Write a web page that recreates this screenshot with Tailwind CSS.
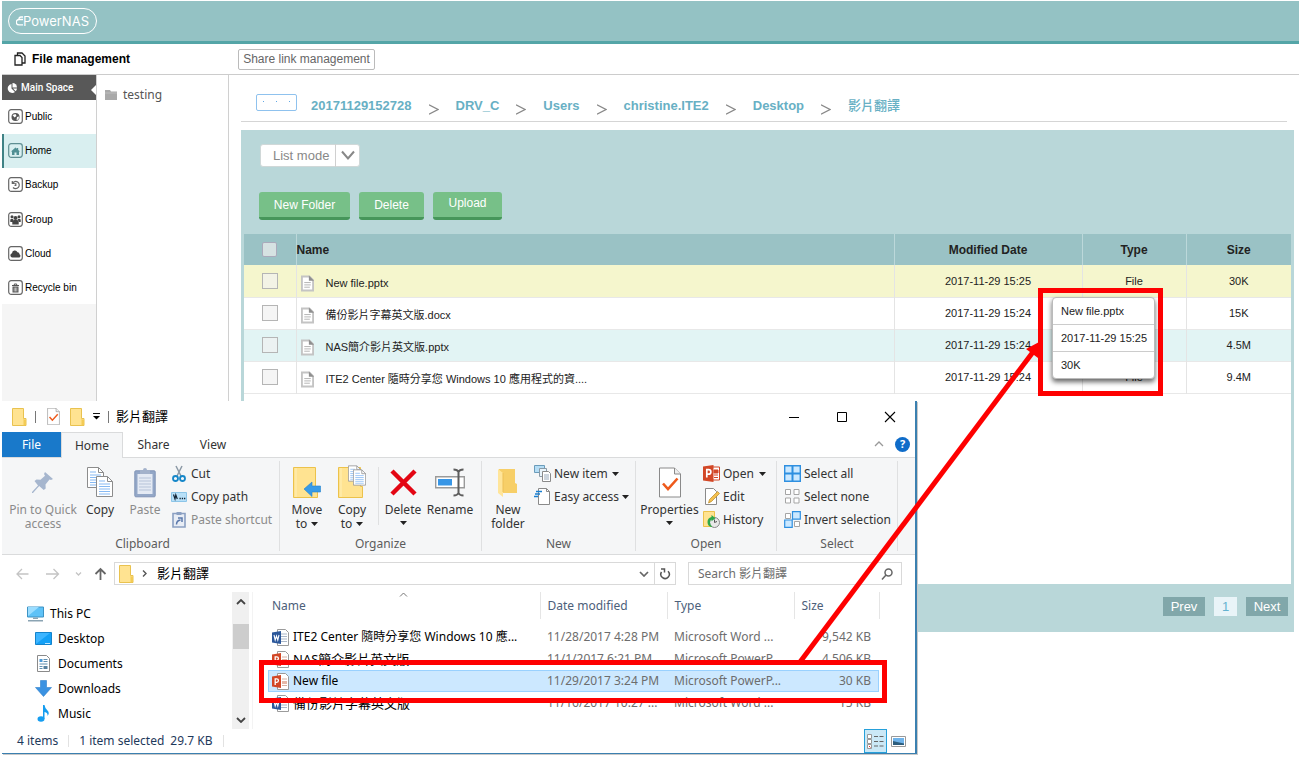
<!DOCTYPE html>
<html lang="en">
<head>
<meta charset="utf-8">
<meta name="viewport" content="width=device-width, initial-scale=1">
<title>PowerNAS - File management</title>
<script src="https://cdn.jsdelivr.net/npm/@tailwindcss/browser@4"></script>
</head>
<body class="bg-white">
<svg class="hidden" aria-hidden="true">
  <symbol id="doc" viewBox="0 0 14 17"><path d="M1 1h8l4 4v11H1z" fill="#fff" stroke="#c4c4c4" stroke-width="2"/><path d="M8.500 0L14 5.500H8.500z" fill="#8f8f8f"/><path d="M3.500 7.500h7M3.500 10h7M3.500 12.500h6" stroke="#b0b0b0"/></symbol>
  <symbol id="folder" viewBox="0 0 15 18"><path d="M.5.5h11v10h2.500v7H.5z" fill="#ffe391" stroke="#e9c24f"/><path d="M11.500 11l2.500 1v5l-2.500.5z" fill="#f3cb55"/></symbol>
  <symbol id="caret" viewBox="0 0 7 4"><path d="M0 0h7L3.500 4z" fill="#222"/></symbol>
  <symbol id="bigfolder" viewBox="0 0 26 31"><path d="M.5.5h22v19h2v11H.5z" fill="#ffe391" stroke="#ecc24b"/><path d="M3 1v29" stroke="#fff0b8"/></symbol>
  <symbol id="page" viewBox="0 0 17 21"><path d="M.5.5h11l5 5v15H.5z" fill="#fff" stroke="#8c8c8c"/><path d="M11.500.5v5h5" fill="none" stroke="#8c8c8c"/><path d="M3 5h6M3 8h11M3 10.500h11M3 13h11M3 15.500h11M3 18h11" stroke="#86b9f3"/></symbol>
  <symbol id="check" viewBox="0 0 22 30"><path d="M.5.5h15l6 6v23H.5z" fill="#fff" stroke="#8a8a8a"/><path d="M15.500.5v6h6" fill="#eee" stroke="#8a8a8a"/><path d="M4 16l5 5.500L18.500 11" fill="none" stroke="#ee5a1c" stroke-width="2.600"/></symbol>
  <symbol id="word" viewBox="0 0 17 17"><path d="M5.500.5h8l3 3v13h-11z" fill="#fff" stroke="#9b9b9b"/><path d="M9 5h6M9 7.500h6M9 10h6M9 12.500h6" stroke="#a9b6c8"/><path d="M0 3.500l9-1.500v13l-9-1.500z" fill="#2b579a"/><path d="M2 6l1.200 5L4.500 7l1.300 4L7 6" fill="none" stroke="#fff" stroke-width="1.100"/></symbol>
  <symbol id="ppt" viewBox="0 0 17 17"><path d="M5.500.5h8l3 3v13h-11z" fill="#fff" stroke="#9b9b9b"/><path d="M10 6h5M10 12.500h5" stroke="#d8b0a2"/><path d="M10 8h5v3h-5z" fill="#e6b8a8"/><path d="M0 3.500l9-1.500v13l-9-1.500z" fill="#d24726"/><path d="M3.200 12V5.800h1.500a1.700 1.700 0 010 3.500H3.200" fill="none" stroke="#fff" stroke-width="1.300"/></symbol>
</svg>

<div class="relative min-h-screen overflow-hidden pt-px pl-[2px] font-['Liberation_Sans','Noto_Sans_CJK_TC',sans-serif] text-[11px] text-[#222]">
  <header class="flex h-[43px] items-start border-b-[3px] border-[#54a5a7] bg-[#94c2c4] pt-[7px] pl-[6px]">
    <div class="flex h-[26px] w-[89px] items-center justify-center rounded-full border border-white text-white">
      <svg class="h-4 w-[7px]" viewBox="0 0 7 16" fill="none" stroke="currentColor" stroke-width="1.300"><path d="M7 4H5a2 2 0 00-2 2.500M7 6.500H3a2.700 2.700 0 000 5.400h4"/></svg>
      <span class="font-['Inter',sans-serif] text-[13px] leading-4">PowerNAS</span>
    </div>
  </header>

  <div class="flex h-[31px] items-center border-b border-[#ccc]">
    <div class="flex w-[236px] items-center gap-[6px] pl-3">
      <svg class="h-[14px] w-3" viewBox="0 0 12 14" fill="#fff" stroke="#222" stroke-width="1.300"><path d="M3.500 1H8l3 3v7H3.500z"/><path d="M1 3.500h5l2 2V13H1z"/></svg>
      <h1 class="text-[12px] font-bold text-black">File management</h1>
    </div>
    <button class="h-[21px] w-[137px] rounded-[2px] border border-[#bbb] text-[12px] whitespace-nowrap text-[#666]">Share link management</button>
  </div>

  <div class="flex">
    <nav class="h-[560px] w-[95px] shrink-0 border-r border-[#d0d0d0] bg-[#f5f5f5] text-[10px] text-black">
      <div class="relative flex h-[25px] items-center gap-1 bg-[#585858] pl-[5px] font-['Roboto',sans-serif] font-medium text-white">
        <svg class="size-[10px]" viewBox="0 0 10 10" fill="#fff"><path d="M4.500 1v4.500L8 9A4.500 4.500 0 114.500 1z"/><path d="M5.500 0A4.500 4.500 0 0110 4.500H5.500z"/><path d="M6 5.500h4A4.500 4.500 0 018.700 8.200z"/></svg>
        Main Space
        <svg class="absolute top-[10px] right-0 h-[10px] w-[5px]" viewBox="0 0 5 10"><path d="M5 0v10L0 5z" fill="#fff"/></svg>
      </div>
      <a href="#" class="flex h-[34px] items-center gap-[2px] bg-white pb-[2px] pl-[6px]"><svg class="size-[15px]" viewBox="0 0 15 15"><rect x=".7" y=".7" width="13.600" height="13.600" rx="2.500" fill="#fff" stroke="#666" stroke-width="1.200"/><circle cx="7.500" cy="8" r="4" fill="#555"/><path d="M4.500 6l3-1 1 2-2 1.500zM9 8l2-.5-.5 3L8.500 11z" fill="#fff"/></svg>Public</a>
      <a href="#" class="flex h-[34px] items-center gap-[2px] border-l-2 border-[#3f8285] bg-[#d9eff0] pb-[2px] pl-1"><svg class="size-[15px]" viewBox="0 0 15 15"><rect x=".7" y=".7" width="13.600" height="13.600" rx="2.500" fill="#d9eff0" stroke="#5f8f92" stroke-width="1.200"/><path d="M3.300 8.300L7.500 4.500l1.500 1.300V5h1.200v2l1.500 1.300-.7.600V12H8.500V9.500h-2V12H4V8.900z" fill="#4f8f93"/></svg>Home</a>
      <a href="#" class="flex h-[34px] items-center gap-[2px] bg-white pb-[2px] pl-[6px]"><svg class="size-[15px]" viewBox="0 0 15 15" fill="none" stroke="#666" stroke-width="1.200"><rect x=".7" y=".7" width="13.600" height="13.600" rx="2.500" fill="#fff"/><path d="M4.300 4v2.500h2.500M4.500 6.300A3.600 3.600 0 115 10.500M7.800 6v2.300H6.500"/></svg>Backup</a>
      <a href="#" class="flex h-[34px] items-center gap-[2px] bg-white pl-[6px]"><svg class="size-[15px]" viewBox="0 0 15 15"><rect x=".7" y=".7" width="13.600" height="13.600" rx="2.500" fill="#fff" stroke="#666" stroke-width="1.200"/><g fill="#444"><circle cx="4" cy="4.800" r="1.500"/><circle cx="11" cy="4.800" r="1.500"/><circle cx="7.500" cy="6" r="2"/><path d="M2.300 7.500Q4 6 5.500 7.500L4.500 10H2.300zM12.700 7.500Q11 6 9.500 7.500l1 2.500h2.200zM4.300 12.500V10q0-2 2-2h2.400q2 0 2 2v2.500z"/></g></svg>Group</a>
      <a href="#" class="flex h-[34px] items-center gap-[2px] bg-white pl-[6px]"><svg class="size-[15px]" viewBox="0 0 15 15"><rect x=".7" y=".7" width="13.600" height="13.600" rx="2.500" fill="#fff" stroke="#666" stroke-width="1.200"/><path d="M4.300 11.500a2.200 2.200 0 01-.3-4.300 2.900 2.900 0 015.500-1 2 2 0 012 2 1.800 1.800 0 01-.3 3.300z" fill="#444"/></svg>Cloud</a>
      <a href="#" class="flex h-[34px] items-center gap-[2px] bg-white pl-[6px] whitespace-nowrap"><svg class="size-[15px]" viewBox="0 0 15 15"><rect x=".7" y=".7" width="13.600" height="13.600" rx="2.500" fill="#fff" stroke="#666" stroke-width="1.200"/><path d="M4 5.500h7M6.300 5V4h2.400v1" fill="none" stroke="#555"/><path d="M4.500 6.500h6v6h-6z" fill="#555"/><path d="M6.200 7.500v4M7.500 7.500v4M8.800 7.500v4" stroke="#fff" stroke-width=".6"/></svg>Recycle bin</a>
    </nav>

    <aside class="w-[132px] shrink-0 border-r border-[#d0d0d0] pt-3 pl-2">
      <div class="flex h-4 items-center gap-[6px] font-['Noto_Sans',sans-serif] text-[12px] text-[#555]">
        <svg class="h-[10px] w-3" viewBox="0 0 12 10"><path d="M0 0h5l1 1.500h6V10H0z" fill="#a9a9a9"/><path d="M0 3h12" stroke="#bdbdbd"/></svg>testing
      </div>
    </aside>

    <main class="min-w-0 flex-1 pl-3">
      <div class="mr-3 flex h-[47px] items-center border-b border-[#d5d5d5] pt-[15px] pl-[15px] text-[13px] font-bold whitespace-nowrap text-[#68b0c4]">
        <button class="mt-1 mr-[14px] flex h-[17px] w-[41px] justify-between self-start rounded-[2px] border border-[#8fc2ee] px-[6px] pt-[6px]" aria-label="Show parent folders"><i class="size-px bg-[#62a8e5]"></i><i class="size-px bg-[#62a8e5]"></i><i class="size-px bg-[#62a8e5]"></i></button>
        <nav class="flex items-center gap-[17px]" aria-label="Breadcrumb">
          <a href="#">20171129152728</a>
          <svg class="mt-2 h-[11px] w-[10px] shrink-0" viewBox="0 0 10 11"><path d="M0 .7l9 4.800-9 4.800" fill="none" stroke="#888" stroke-width="1.200"/></svg>
          <a href="#">DRV_C</a>
          <svg class="mt-2 h-[11px] w-[10px] shrink-0" viewBox="0 0 10 11"><path d="M0 .7l9 4.800-9 4.800" fill="none" stroke="#888" stroke-width="1.200"/></svg>
          <a href="#">Users</a>
          <svg class="mt-2 h-[11px] w-[10px] shrink-0" viewBox="0 0 10 11"><path d="M0 .7l9 4.800-9 4.800" fill="none" stroke="#888" stroke-width="1.200"/></svg>
          <a href="#">christine.ITE2</a>
          <svg class="mt-2 h-[11px] w-[10px] shrink-0" viewBox="0 0 10 11"><path d="M0 .7l9 4.800-9 4.800" fill="none" stroke="#888" stroke-width="1.200"/></svg>
          <a href="#">Desktop</a>
          <svg class="mt-2 h-[11px] w-[10px] shrink-0" viewBox="0 0 10 11"><path d="M0 .7l9 4.800-9 4.800" fill="none" stroke="#888" stroke-width="1.200"/></svg>
          <a href="#" class="font-medium">影片翻譯</a>
        </nav>
      </div>

      <section class="mt-2 mr-[5px] bg-[#b9d7d9] px-[3px]">
        <div class="pt-[14px] pl-4">
          <label class="relative inline-block">
            <select aria-label="View mode" class="block h-[23px] w-[100px] appearance-none rounded-[3px] border border-[#d0d8d8] bg-white pl-3 text-[13px] text-[#888]"><option>List mode</option></select>
            <svg class="pointer-events-none absolute top-0 right-0 h-[23px] w-[25px]" viewBox="0 0 25 23" fill="none"><path d="M.5 0v23" stroke="#d0d0d0"/><path d="M7 7.500l6 7 6-7" stroke="#888" stroke-width="2"/></svg>
          </label>
        </div>
        <div class="flex gap-[9px] pt-[25px] pl-[15px] text-[12px] text-white">
          <button class="h-7 w-[91px] rounded-[3px] border-b-[3px] border-[#46965a] bg-[#77c088]">New Folder</button>
          <button class="h-7 w-[65px] rounded-[3px] border-b-[3px] border-[#46965a] bg-[#77c088]">Delete</button>
          <button class="h-7 w-[69px] rounded-[3px] border-b-[3px] border-[#46965a] bg-[#77c088] pb-[3px]">Upload</button>
        </div>
        <div class="mt-[14px] h-[350px] bg-white">
          <table class="w-full table-fixed border-collapse text-center">
            <colgroup><col class="w-[52px]"><col><col class="w-[188px]"><col class="w-[104px]"><col class="w-[105px]"></colgroup>
            <thead class="bg-[#9ac2c5] text-[12px] text-[#222]">
              <tr class="h-[31px]">
                <th class="border-r border-[#bcd8da]"><input type="checkbox" aria-label="Select all files" class="mx-auto block size-[15px] appearance-none rounded-[2px] border border-[#aab] bg-[#d6e2e2]"></th>
                <th class="border-r border-[#bcd8da] text-left">Name</th><th class="border-r border-[#bcd8da]">Modified Date</th><th class="border-r border-[#bcd8da]">Type</th><th>Size</th>
              </tr>
            </thead>
            <tbody>
              <tr class="h-8 border-b border-[#e8e8e8] bg-[#f5f6cd]"><td class="border-r border-[#e4e4e4]"><input type="checkbox" aria-label="Select New file.pptx" class="mx-auto block size-4 appearance-none border border-[#b5b5b5] bg-[#f3f3e6]"></td><td class="border-r border-[#e4e4e4] text-left"><span class="flex items-center gap-3 pt-[5px] pl-1"><svg class="h-[17px] w-[13px]"><use href="#doc"/></svg>New file.pptx</span></td><td class="border-r border-[#e4e4e4]">2017-11-29 15:25</td><td class="border-r border-[#e4e4e4]">File</td><td>30K</td></tr>
              <tr class="h-8 border-b border-[#e8e8e8]"><td class="border-r border-[#e4e4e4]"><input type="checkbox" aria-label="Select 備份影片字幕英文版.docx" class="mx-auto block size-4 appearance-none border border-[#b5b5b5] bg-[#f5f5f5]"></td><td class="border-r border-[#e4e4e4] text-left"><span class="flex items-center gap-3 pt-[5px] pl-1"><svg class="h-[17px] w-[13px]"><use href="#doc"/></svg>備份影片字幕英文版.docx</span></td><td class="border-r border-[#e4e4e4]">2017-11-29 15:24</td><td class="border-r border-[#e4e4e4]">File</td><td>15K</td></tr>
              <tr class="h-8 border-b border-[#e8e8e8] bg-[#e2f4f4]"><td class="border-r border-[#e4e4e4]"><input type="checkbox" aria-label="Select NAS簡介影片英文版.pptx" class="mx-auto block size-4 appearance-none border border-[#b5b5b5] bg-[#ecf2f2]"></td><td class="border-r border-[#e4e4e4] text-left"><span class="flex items-center gap-3 pt-[5px] pl-1"><svg class="h-[17px] w-[13px]"><use href="#doc"/></svg>NAS簡介影片英文版.pptx</span></td><td class="border-r border-[#e4e4e4]">2017-11-29 15:24</td><td class="border-r border-[#e4e4e4]">File</td><td>4.5M</td></tr>
              <tr class="h-8 border-b border-[#e8e8e8]"><td class="border-r border-[#e4e4e4]"><input type="checkbox" aria-label="Select ITE2 Center document" class="mx-auto block size-4 appearance-none border border-[#b5b5b5] bg-[#f5f5f5]"></td><td class="border-r border-[#e4e4e4] text-left"><span class="flex items-center gap-3 pt-[5px] pl-1"><svg class="h-[17px] w-[13px]"><use href="#doc"/></svg>ITE2 Center 隨時分享您 Windows 10 應用程式的資....</span></td><td class="border-r border-[#e4e4e4]">2017-11-29 15:24</td><td class="border-r border-[#e4e4e4]">File</td><td>9.4M</td></tr>
            </tbody>
          </table>
        </div>
        <div class="flex h-12 items-center justify-end gap-[9px] pr-[3px] pb-1 text-[13px] text-white">
          <button class="h-[19px] w-[42px] bg-[#81a7aa]">Prev</button>
          <button class="h-[19px] w-[23px] bg-[#e9f4f8] text-[#64b2d0]">1</button>
          <button class="h-[19px] w-[42px] bg-[#81a7aa]">Next</button>
        </div>
      </section>
    </main>
  </div>

  <!-- Details popup of the hovered file -->
  <div class="absolute top-[297px] left-[1052px] w-[103px] rounded-[4px] border border-[#bbb] bg-white leading-[26px] whitespace-nowrap shadow-[0_3px_5px_rgba(0,0,0,0.6)]">
    <p class="border-b border-[#ccc] px-2">New file.pptx</p>
    <p class="border-b border-[#ccc] px-2">2017-11-29 15:25</p>
    <p class="px-2">30K</p>
  </div>

  <!-- Explorer window -->
  <section aria-label="File Explorer" class="absolute top-[401px] left-[2px] flex w-[915px] flex-col border-r-2 border-b border-[#3b80b0] bg-white font-['Noto_Sans','Noto_Sans_CJK_TC',sans-serif] text-[11px] text-[#333] shadow-[1px_1px_0_#c9c9c9]">
    <div class="flex h-[31px] items-center pl-[10px] text-[13px] text-black">
      <svg class="h-[18px] w-[15px]"><use href="#folder"/></svg>
      <i class="mr-[11px] ml-2 h-3 w-px bg-[#777]"></i>
      <svg class="h-[17px] w-[13px]"><use href="#check"/></svg>
      <svg class="ml-[10px] h-[18px] w-[15px]"><use href="#folder"/></svg>
      <svg class="ml-[7px] h-[7px] w-[9px]" viewBox="0 0 9 7"><path d="M1 .5h7" stroke="#111"/><path d="M1 3h7L4.500 6.500z"/></svg>
      <i class="mx-[7px] h-3 w-px bg-[#777]"></i>
      <span>影片翻譯</span>
      <div class="ml-auto flex gap-9 pr-[19px]">
        <button aria-label="Minimize"><svg class="size-3" viewBox="0 0 12 12"><path d="M1 6.500h10" stroke="#000"/></svg></button>
        <button aria-label="Maximize"><svg class="size-3" viewBox="0 0 12 12"><path d="M1.500 1.500h9v9h-9z" fill="none" stroke="#000"/></svg></button>
        <button aria-label="Close"><svg class="size-3" viewBox="0 0 12 12"><path d="M1 1l10 10M11 1L1 11" stroke="#000" stroke-width="1.100"/></svg></button>
      </div>
    </div>
    <div class="flex h-[26px] items-stretch border-b border-[#dadbdc] text-[12px]">
      <button class="w-[59px] bg-[#1979ca] text-white">File</button>
      <button class="-mb-px w-[62px] border border-b-0 border-[#dadbdc] bg-[#f5f6f7]">Home</button>
      <button class="w-[61px]">Share</button>
      <button class="w-[58px]">View</button>
      <div class="ml-auto flex items-center gap-[11px] pr-[5px] pb-px">
        <svg class="h-[6px] w-[10px]" viewBox="0 0 10 6"><path d="M1 5l4-4 4 4" fill="none" stroke="#999" stroke-width="1.300"/></svg>
        <button aria-label="Help" class="flex size-[15px] items-center justify-center rounded-full bg-[#0f6cc9] text-[11px] font-bold text-white">?</button>
      </div>
    </div>

    <div class="flex h-[97px] border-b border-[#dadbdc] bg-[#f5f6f7] py-[3px] text-[12px] leading-[14px]">
      <div class="flex w-[278px] flex-col justify-between border-r border-[#dfe0e1] pl-1">
        <div class="flex">
          <button class="flex w-[74px] flex-col items-center pt-[6px] text-[#8b8b8b]"><svg class="mb-[5px] h-[31px] w-6" viewBox="0 0 24 31" fill="#a6b6ce"><path d="M14 5l8 7-2 1-1.500-.5-4 5 .2 4-2 1.500-4.500-4L2 26l-1 0 0-1 6-6.500L3.500 14l2-1.500 4 .2 4.500-4-1-1.700z"/></svg>Pin to Quick<br>access</button>
          <button class="flex w-10 flex-col items-center pt-[6px]"><svg class="mb-[5px] h-[31px] w-[26px]" viewBox="0 0 26 31"><use href="#page" x="0" y="0" width="17" height="21"/><use href="#page" x="9" y="9" width="17" height="21"/></svg>Copy</button>
          <button class="flex w-[50px] flex-col items-center pt-[6px] text-[#8b8b8b]"><svg class="mb-[5px] h-[31px] w-[22px]" viewBox="0 0 22 31"><rect x=".8" y="3.800" width="20.400" height="26" rx="1" fill="#93a7c7" stroke="#8195b7"/><path d="M3.500 7h15v20h-15z" fill="#e4eaf4"/><path d="M5 11h12M5 14h12M5 17h12M5 20h12M5 23h12" stroke="#b6c3d8"/><path d="M6 3h3a2 2 0 014 0h3v4H6z" fill="#a3b2cb"/></svg>Paste</button>
          <div class="flex flex-col pt-px pl-px">
            <button class="flex h-[23px] items-center gap-1 text-left"><svg class="h-[17px] w-4" viewBox="0 0 16 17" fill="none"><path d="M5 1l5 10M11 1L6 11" stroke="#8c99a6" stroke-width="1.500"/><circle cx="4.500" cy="13.500" r="2.500" stroke="#1687c9" stroke-width="1.800"/><circle cx="11.500" cy="13.500" r="2.500" stroke="#1687c9" stroke-width="1.800"/></svg>Cut</button>
            <button class="flex h-[23px] items-center gap-1 whitespace-nowrap"><svg class="h-[10px] w-4" viewBox="0 0 16 10"><path d="M.5.5h15v9H.5z" fill="#b8e0f8" stroke="#8cc5e8"/><path d="M2.500 2.500l1.500 4.500.8-4 1.500 4" fill="none" stroke="#123" stroke-width="1.200"/><path d="M8.500 6.500h1.300M10.800 6.500h1.300M13 6.500h1.300" stroke="#123" stroke-width="1.300"/></svg>Copy path</button>
            <button class="flex h-[23px] items-center gap-1 whitespace-nowrap text-[#8b8b8b]"><svg class="h-[17px] w-4" viewBox="0 0 16 17"><path d="M2 2.500h12V16H2z" fill="#e8edf5" stroke="#8ba0c2" stroke-width="1.600"/><path d="M5.500 1h5v3h-5z" fill="#8ba0c2"/><path d="M5.500 13.500q0-4 4-4.500M7 7h4v4" fill="none" stroke="#5a78ab" stroke-width="1.500"/></svg>Paste shortcut</button>
          </div>
        </div>
        <div class="text-center text-[#5c5c5c]">Clipboard</div>
      </div>
      <div class="flex w-[202px] shrink-0 flex-col justify-between border-r border-[#dfe0e1]">
        <div class="flex">
          <button class="flex w-[50px] flex-col items-center pt-[6px] pl-1"><svg class="mb-[5px] h-[31px] w-7" viewBox="0 0 28 31"><use href="#bigfolder" x="0" y="0" width="26" height="31"/><path d="M11 22l8-7v4h8.500v6H19v4.500z" fill="#379be8" stroke="#2583cd" stroke-width=".6"/></svg>Move<span class="flex items-center gap-1">to<svg class="h-1 w-[7px]"><use href="#caret"/></svg></span></button>
          <button class="flex w-10 flex-col items-center pt-1 pl-1"><svg class="mb-[5px] h-[33px] w-7" viewBox="0 0 28 33"><use href="#bigfolder" x="0" y="2" width="26" height="31"/><use href="#page" x="10" y="0" width="13" height="17"/><use href="#page" x="15" y="4" width="13" height="17"/></svg>Copy<span class="flex items-center gap-1">to<svg class="h-1 w-[7px]"><use href="#caret"/></svg></span></button>
          <i class="mt-[6px] ml-2 h-[58px] w-px bg-[#dfe0e1]"></i>
          <button class="flex w-12 flex-col items-center pt-[6px]"><svg class="mb-[5px] h-[31px] w-[27px]" viewBox="0 0 27 31"><path d="M2 4l23 23M25 4L2 27" stroke="#e30613" stroke-width="4.500"/></svg>Delete<svg class="mt-1 h-1 w-[7px]"><use href="#caret"/></svg></button>
          <button class="flex w-[46px] flex-col items-center pt-[6px]"><svg class="mb-[5px] h-[31px] w-[30px]" viewBox="0 0 30 31" fill="none"><path d="M.7 9.700h28.600v11H.7z" fill="#fff" stroke="#9a9a9a" stroke-width="1.400"/><path d="M3 12h14v6.500H3z" fill="#3796e6"/><path d="M18.500 2.500q4 0 5 2.500 1-2.500 5-2.500M23.500 4v23M18.500 28.500q4 0 5-2.500 1 2.500 5 2.500" stroke="#5d5d5d" stroke-width="2"/></svg>Rename</button>
        </div>
        <div class="text-center text-[#5c5c5c]">Organize</div>
      </div>
      <div class="flex w-[154px] shrink-0 flex-col justify-between border-r border-[#dfe0e1]">
        <div class="flex">
          <button class="flex w-[52px] flex-col items-center pt-[6px]"><svg class="mb-[5px] h-[31px] w-[20px]" viewBox="0 0 20 31"><path d="M1 2h16v14l2 1v9H1z" fill="#f7cf68"/><path d="M0 2l5 4v24L0 26z" fill="#ffe59a"/><path d="M5 6v19" stroke="#edc056"/></svg>New<br>folder</button>
          <div class="flex flex-col pt-px">
            <button class="flex h-[23px] items-center gap-[3px] whitespace-nowrap"><svg class="size-[17px]" viewBox="0 0 17 17"><path d="M.5.5h10v7H.5z" fill="#b5ddf5" stroke="#6b9cba"/><path d="M5.500 3.500h7v8h-7z" fill="#e9f4fb" stroke="#8a9aa6"/><path d="M8.500 6.500h6l2 2v8h-8z" fill="#fff" stroke="#8a8a8a"/><path d="M10 10h5M10 12h5M10 14h5" stroke="#9ab"/></svg>New item<svg class="ml-px h-1 w-[7px]"><use href="#caret"/></svg></button>
            <button class="flex h-[23px] items-center gap-[3px] whitespace-nowrap"><svg class="size-[17px]" viewBox="0 0 17 17"><path d="M4.500.5h8l3 3v13h-11z" fill="#fff" stroke="#8a8a8a"/><path d="M12.500.5v3h3" fill="none" stroke="#8a8a8a"/><path d="M2 3.500h6M1 6h5M0 8.500h4" stroke="#1a7fd0" stroke-width="1.400"/></svg>Easy access<svg class="h-1 w-[7px]"><use href="#caret"/></svg></button>
          </div>
        </div>
        <div class="text-center text-[#5c5c5c]">New</div>
      </div>
      <div class="flex w-[141px] shrink-0 flex-col justify-between border-r border-[#dfe0e1]">
        <div class="flex">
          <button class="flex w-[67px] flex-col items-center pt-[6px]"><svg class="mb-[5px] h-[31px] w-[22px]"><use href="#check"/></svg>Properties<svg class="mt-1 h-1 w-[7px]"><use href="#caret"/></svg></button>
          <div class="flex flex-col pt-px">
            <button class="flex h-[23px] items-center gap-[3px]"><svg class="size-[17px]" viewBox="0 0 17 17"><path d="M8 2h8.500v13H8z" fill="#fff" stroke="#d24726"/><path d="M11 5h4v3h-4zM11 10h4M11 12.500h4" fill="#d24726" stroke="#d24726"/><path d="M0 1.500L10.500 0v17L0 15.500z" fill="#d24726"/><path d="M3.800 12.500V4.700h1.800a2.200 2.200 0 010 4.500H3.800" fill="none" stroke="#fff" stroke-width="1.700"/></svg>Open<svg class="ml-[2px] h-1 w-[7px]"><use href="#caret"/></svg></button>
            <button class="flex h-[23px] items-center gap-[3px]"><svg class="size-[17px]" viewBox="0 0 17 17"><path d="M2.500.5h8l3 3v13h-11z" fill="#fff" stroke="#8a8a8a"/><path d="M5.500 15l1-3.500 8-8 2 2-8 8z" fill="#f4c04e" stroke="#b98a2a" stroke-width=".7"/></svg>Edit</button>
            <button class="flex h-[23px] items-center gap-[3px]"><svg class="size-[17px]" viewBox="0 0 17 17"><path d="M.5.5h11v15H.5z" fill="#ffe391" stroke="#ecc24b"/><circle cx="11.500" cy="11.500" r="5" fill="#e8e8e8" stroke="#888"/><path d="M11.500 8.500v3l2.500-1" fill="none" stroke="#555"/><path d="M4.500 11q0-4 4-5V4l4 3.200-4 3V8.500q-1.500.5-1.500 3t2.500 4.500q-5 0-5-5z" fill="#2fa84a"/></svg>History</button>
          </div>
        </div>
        <div class="text-center text-[#5c5c5c]">Open</div>
      </div>
      <div class="flex w-[121px] shrink-0 flex-col justify-between border-r border-[#dfe0e1]">
        <div class="flex flex-col items-start pt-px pl-[7px] whitespace-nowrap">
          <button class="flex h-[23px] items-center gap-[3px]"><svg class="size-[17px]" viewBox="0 0 17 17"><path d="M.7.700h15.600v15.600H.7z" fill="#cbe8ff" stroke="#2e8fe0" stroke-width="1.400"/><path d="M8.500 0v17M0 8.500h17" stroke="#2e8fe0" stroke-width="2"/></svg>Select all</button>
          <button class="flex h-[23px] items-center gap-[3px]"><svg class="size-[17px]" viewBox="0 0 17 17" fill="#fff" stroke="#a5a5a5"><path d="M1.500 1.500h5v5h-5zM10 1.500h5v5h-5zM1.500 10h5v5h-5zM10 10h5v5h-5z"/></svg>Select none</button>
          <button class="flex h-[23px] items-center gap-[3px]"><svg class="size-[17px]" viewBox="0 0 17 17"><path d="M1.500 2.500h5v5h-5zM10.500 10.500h5v5h-5z" fill="#fff" stroke="#a5a5a5"/><path d="M8.500.700h7.800v7.500H8.500zM.7 9h7.500v7.300H.7z" fill="#cbe8ff" stroke="#2e8fe0" stroke-width="1.200"/></svg>Invert selection</button>
        </div>
        <div class="text-center text-[#5c5c5c]">Select</div>
      </div>
    </div>

    <div class="flex h-[37px] items-center pr-[13px] text-[12px]">
      <svg class="ml-[14px] h-[14px] w-[92px] shrink-0" viewBox="0 0 92 14" fill="none"><path d="M12.500 7H1M6 2L1 7l5 5M30 7h12.500M37.500 2l5 5-5 5" stroke="#c4c4c4" stroke-width="1.300"/><path d="M60 5.500l2.500 2.500L65 5.500" stroke="#c4c4c4" stroke-width="1.300"/><path d="M84.500 13V2M79.500 7l5-5 5 5" stroke="#666" stroke-width="1.800"/></svg>
      <div class="ml-[6px] flex h-[23px] flex-1 items-center border border-[#d9d9d9] pl-1 text-[13px] text-black">
        <svg class="h-[18px] w-[15px]"><use href="#folder"/></svg>
        <svg class="mr-[10px] ml-2 h-[7px] w-[5px]" viewBox="0 0 5 7"><path d="M1 .5l3 3-3 3" fill="none" stroke="#555" stroke-width="1.400"/></svg>
        影片翻譯
        <svg class="mr-[5px] ml-auto h-[6px] w-[10px]" viewBox="0 0 10 6"><path d="M1 1l4 4 4-4" fill="none" stroke="#666" stroke-width="1.700"/></svg>
        <button aria-label="Refresh" class="flex h-full w-[21px] items-center justify-center border-l border-[#d9d9d9]"><svg class="size-3" viewBox="0 0 12 12" fill="none" stroke="#555" stroke-width="1.500"><path d="M9 3.200A4.200 4.200 0 112.500 4M2 1h3.500v3.500"/></svg></button>
      </div>
      <label class="ml-3 flex h-[23px] w-[214px] items-center border border-[#d9d9d9] pr-2 pl-[9px]">
        <input type="text" placeholder="Search 影片翻譯" aria-label="Search 影片翻譯" class="min-w-0 flex-1 outline-none placeholder:text-[#6d6d6d]">
        <svg class="size-3" viewBox="0 0 12 12" fill="none" stroke="#666" stroke-width="1.500"><circle cx="7.500" cy="4.500" r="3.500"/><path d="M5 7L1 11.500"/></svg>
      </label>
    </div>

    <div class="flex h-[137px]">
      <ul class="flex-1 pt-[9px] pl-[25px] text-[12px] leading-[25px] text-black">
        <li class="flex items-center gap-[6px]"><svg class="h-4 w-[17px]" viewBox="0 0 17 16"><path d="M.5 1h16v10H.5z" fill="#5fc2f7" stroke="#3d93c4"/><path d="M1 10L12 1H1z" fill="#9bddff"/><path d="M6 11.500h5V13H6zM1 14h15v1.500H1z" fill="#8ba4b3"/></svg>This PC</li>
        <li class="flex items-center gap-[6px] pl-2"><svg class="h-[13px] w-[17px]" viewBox="0 0 17 13"><path d="M.5.5h16v12H.5z" fill="#14a0f6" stroke="#1483cb"/><path d="M1 12L15 1H1z" fill="#3db5ff"/><path d="M10 11.500h5" stroke="#bfe6ff"/></svg>Desktop</li>
        <li class="flex items-center gap-[6px] pl-2"><svg class="h-[17px] w-[17px]" viewBox="0 0 17 17"><path d="M2.500.5h9l3 3v13h-12z" fill="#fff" stroke="#8a8a8a"/><path d="M4.500 4h3v3h-3z" fill="#4f9bd8"/><path d="M8.500 4.500h4M8.500 6.500h4M4.500 9h8M4.500 11.500h3M4.500 13.500h3" stroke="#5f8fb0"/><path d="M8.500 11h4v3h-4z" fill="#58819e"/></svg>Documents</li>
        <li class="flex items-center gap-[6px] pl-2"><svg class="h-[17px] w-[17px]" viewBox="0 0 17 17"><path d="M5.500.5h6v7h5l-8 9-8-9h5z" fill="#3a92e2" stroke="#2d7fcb" stroke-width=".6"/></svg>Downloads</li>
        <li class="flex items-center gap-[6px] pl-2"><svg class="h-[17px] w-[17px]" viewBox="0 0 17 17"><ellipse cx="6" cy="14" rx="3.500" ry="2.700" fill="#159df0"/><path d="M8 0h1.500q.5 3.500 3 5.500 2.500 2.500 0 5.500.5-3.500-3-4v7H8z" fill="#159df0"/></svg>Music</li>
      </ul>
      <div class="flex w-[17px] shrink-0 flex-col items-center bg-[#f0f0f0] pt-[7px] pb-[6px]">
        <svg class="h-[6px] w-[10px]" viewBox="0 0 10 6"><path d="M1 5l4-4 4 4" fill="none" stroke="#444" stroke-width="1.800"/></svg>
        <i class="mt-[19px] h-[25px] w-4 bg-[#cdcdcd]"></i>
        <svg class="mt-auto h-[6px] w-[10px]" viewBox="0 0 10 6"><path d="M1 1l4 4 4-4" fill="none" stroke="#444" stroke-width="1.800"/></svg>
      </div>
      <div class="ml-[3px] w-[663px] shrink-0 border-l border-[#f3f3f3] pl-[15px]">
        <table class="w-[611px] table-fixed border-collapse text-left text-[12px] whitespace-nowrap text-[#6d6d6d]">
          <colgroup><col class="w-[272px]"><col class="w-[127px]"><col class="w-[127px]"><col class="w-[85px]"></colgroup>
          <thead class="text-[#4c607a]">
            <tr class="h-[27px]">
              <th class="relative border-r border-[#e5e5e5] pl-1 font-normal">Name<svg class="absolute top-0 left-[131px] h-[5px] w-[9px]" viewBox="0 0 9 5"><path d="M1 4.500l3.500-3.500L8 4.500" fill="none" stroke="#777"/></svg></th>
              <th class="border-r border-[#e5e5e5] pl-[7px] font-normal">Date modified</th>
              <th class="border-r border-[#e5e5e5] pl-[7px] font-normal">Type</th>
              <th class="border-r border-[#e5e5e5] pl-[7px] font-normal">Size</th>
            </tr>
          </thead>
          <tbody class="leading-[22px]">
            <tr class="h-[7px]"><td colspan="4"></td></tr>
            <tr><td class="pl-1 text-black"><span class="flex items-center gap-1"><svg class="size-[17px]"><use href="#word"/></svg>ITE2 Center 隨時分享您 Windows 10 應...</span></td><td class="pl-[7px]">11/28/2017 4:28 PM</td><td class="pl-[7px]">Microsoft Word ...</td><td class="pr-2 text-right">9,542 KB</td></tr>
            <tr><td class="pl-1 text-black"><span class="flex items-center gap-1"><svg class="size-[17px]"><use href="#ppt"/></svg><span class="text-[13px]">NAS簡介影片英文版</span></span></td><td class="pl-[7px]">11/1/2017 6:21 PM</td><td class="pl-[7px]">Microsoft PowerP...</td><td class="pr-2 text-right">4,506 KB</td></tr>
            <tr class="bg-[#cce8ff] outline outline-1 -outline-offset-1 outline-[#99d1ff]"><td class="pl-1 text-black"><span class="flex items-center gap-1"><svg class="size-[17px]"><use href="#ppt"/></svg>New file</span></td><td class="pl-[7px]">11/29/2017 3:24 PM</td><td class="pl-[7px]">Microsoft PowerP...</td><td class="pr-2 text-right">30 KB</td></tr>
            <tr><td class="pl-1 text-black"><span class="flex items-center gap-1"><svg class="size-[17px]"><use href="#word"/></svg><span class="text-[13px]">備份影片字幕英文版</span></span></td><td class="pl-[7px]">11/16/2017 10:27 ...</td><td class="pl-[7px]">Microsoft Word ...</td><td class="pr-2 text-right">15 KB</td></tr>
          </tbody>
        </table>
      </div>
    </div>

    <div class="flex h-6 items-center pl-[15px] text-[12px] whitespace-nowrap text-[#1e395b]">
      <span>4 items</span><i class="mx-[10px] h-3 w-px bg-[#e2e2e2]"></i><span>1 item selected</span><span class="ml-[6px]">29.7 KB</span><i class="ml-[11px] h-3 w-px bg-[#e2e2e2]"></i>
      <div class="ml-auto flex items-center gap-1 pr-[9px]">
        <button aria-label="Details view" class="flex h-6 w-[23px] items-center justify-center border border-[#26a0da] bg-[#cbe8f6]"><svg class="h-[15px] w-[17px]" viewBox="0 0 17 15" fill="none"><path d="M.5.5h4v4h-4zM.5 5.500h4v4h-4zM.5 10.500h4v4h-4z" fill="#fff" stroke="#999"/><path d="M2 12l1.500 1.500" stroke="#d33"/><path d="M7 2.500h4M12.500 2.500h4M7 7.500h4M12.500 7.500h4M7 12h4M12.500 12h4" stroke="#666"/></svg></button>
        <button aria-label="Thumbnail view"><svg class="block h-[11px] w-[15px]" viewBox="0 0 15 11"><path d="M.5.5h14v10H.5z" fill="#fff" stroke="#999"/><path d="M2 2h11v7H2z" fill="#6fb3ea"/><path d="M2 5l4 1 7 1.500V9H2z" fill="#2d5d7d"/></svg></button>
      </div>
    </div>
  </section>

  <!-- Callouts linking the local file to the uploaded one -->
  <div class="absolute top-[288px] left-[1038px] h-[108px] w-[125px] border-[5px] border-[#fe0000]"></div>
  <div class="absolute top-[660px] left-[259px] h-[43px] w-[628px] border-[5px] border-[#fe0000]"></div>
  <svg class="pointer-events-none absolute top-[336px] left-[790px] h-[330px] w-[260px]" viewBox="0 0 260 330"><path d="M10 326L243 16" stroke="#fe0000" stroke-width="5"/><path d="M251 5l-15 8 12 9z" fill="#fe0000"/></svg>
</div>
</body>
</html>
